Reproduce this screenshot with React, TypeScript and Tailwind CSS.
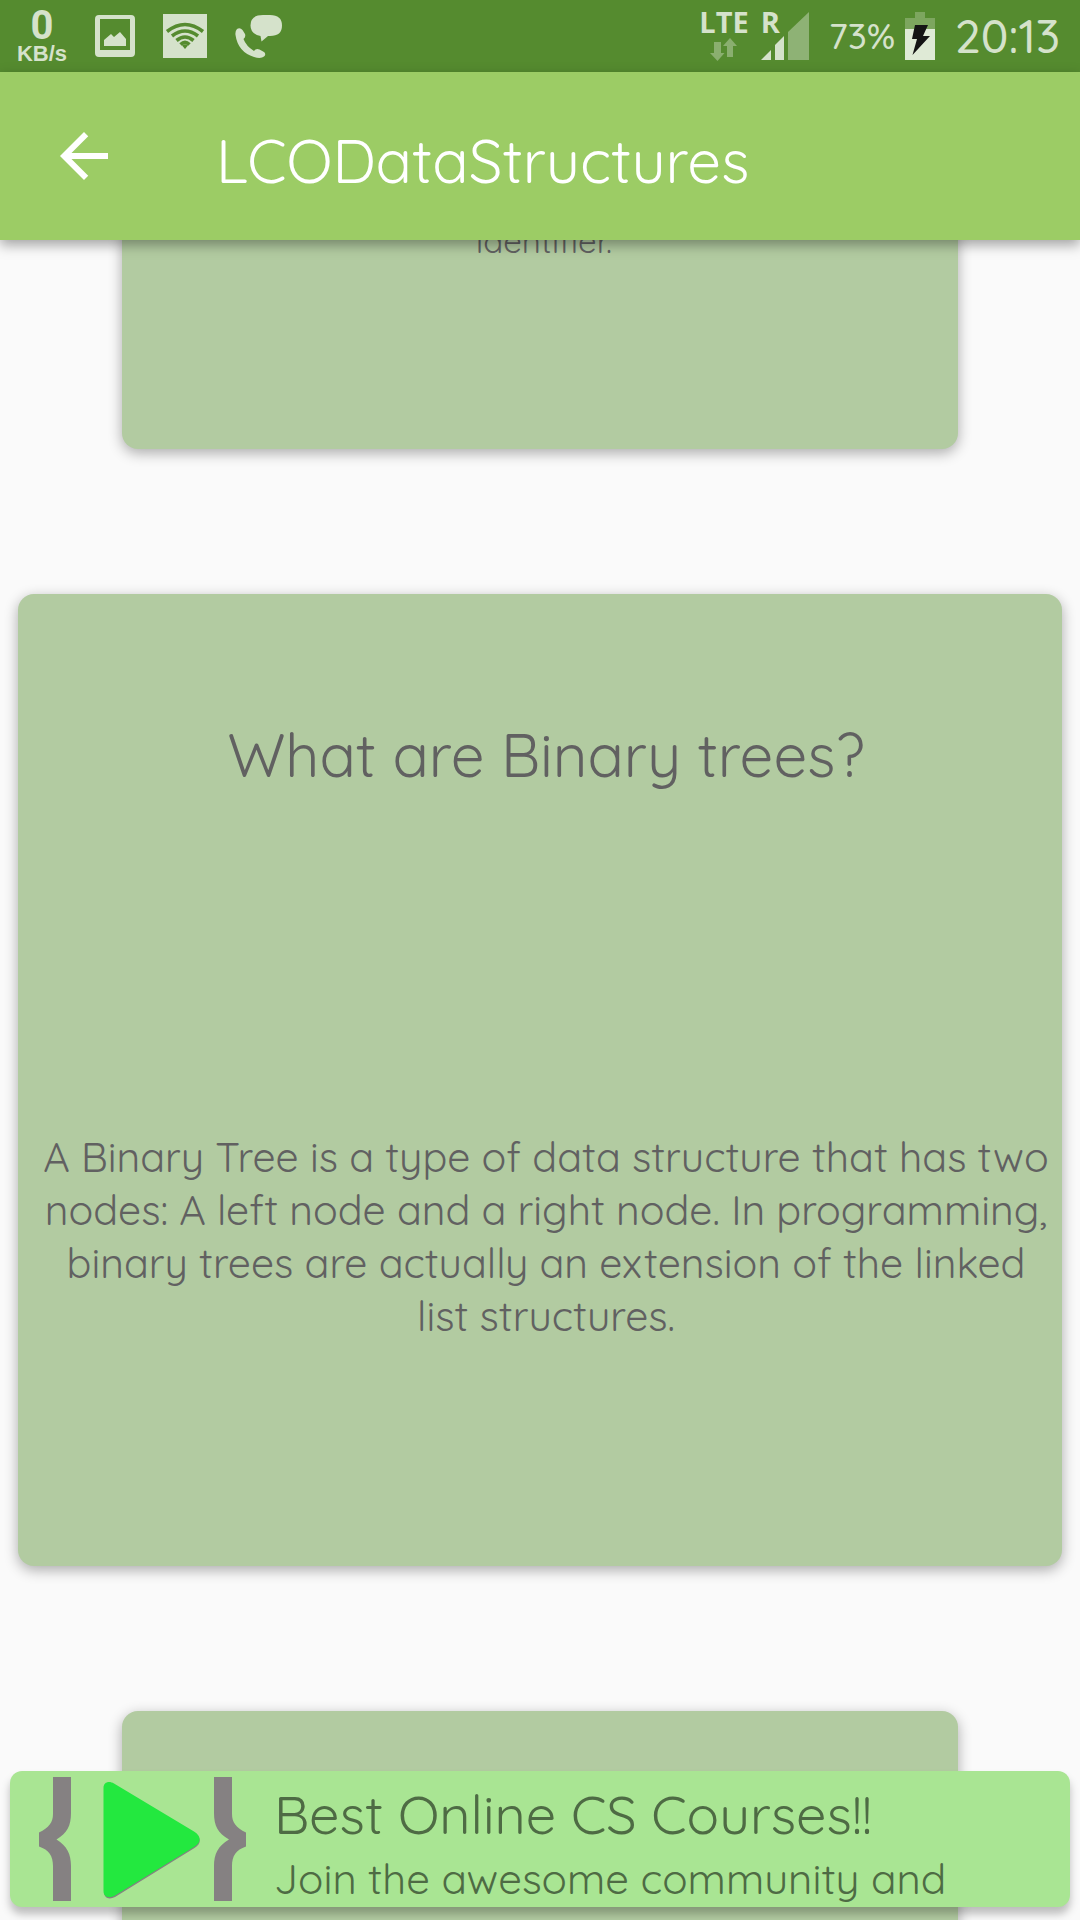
const CARD = "rounded-2xl bg-[#b2cba1] text-center text-[#616161] shadow-[0_4px_14px_rgba(0,0,0,0.32)]";

function PictureIcon() {
  return (
    <svg className="h-[42px] w-10" viewBox="0 0 40 42" fill="currentColor" aria-hidden="true">
      <path fillRule="evenodd" d="M4 0H36Q40 0 40 4V38Q40 42 36 42H4Q0 42 0 38V4Q0 0 4 0ZM5 4V35H35V4Z" />
      <path d="M9 31V25L16 19L19 22L25 17L31 24V31Z" />
    </svg>
  );
}

function WifiIcon() {
  return (
    <svg className="size-11" viewBox="0 0 44 44" aria-hidden="true">
      <rect width="44" height="44" fill="currentColor" />
      <g fill="none" stroke="#558b2f" strokeWidth="3.6">
        <path d="M4 17.5Q22 3.500 40 17.5" />
        <path d="M9 22Q22 12 35 22" />
        <path d="M13.500 26.500Q22 19.500 30.500 26.500" />
        <path d="M17.500 30.500Q22 26.500 26.500 30.500" />
      </g>
      <path d="M19 31.500Q22 29.500 25 31.500L22 35Z" fill="#558b2f" />
    </svg>
  );
}

function CallIcon() {
  return (
    <svg className="h-[43px] w-12" viewBox="0 0 48 43" fill="currentColor" aria-hidden="true">
      <path d="M28 0H35Q47 0 47 10.500Q47 21 35 21H33L26.500 26.500L25.500 21Q15.500 19 15.500 10.500Q15.500 0 28 0Z" />
      <path d="M2 14Q5 12 7.500 15L10 19Q11 22 8.500 24Q11 31 19 36Q21 33 24.500 34.500L29 37Q31.500 39 29 41.500Q26 44 19 42Q3 37 .500 20Q0 16 2 14Z" />
    </svg>
  );
}

function DataArrowsIcon() {
  return (
    <svg className="h-6 w-7" viewBox="0 0 28 24" fill="currentColor" aria-hidden="true">
      <path d="M4 4H11V15H14.500L7.500 23L0 15H4Z" />
      <path d="M17 19H23V8H27L20 0L13 8H17Z" />
    </svg>
  );
}

function SignalIcon() {
  return (
    <svg className="h-12 w-12" viewBox="0 0 48 48" fill="currentColor" aria-hidden="true">
      <path d="M0 48L10 38V48Z" />
      <path d="M14 48V33L23 24V48Z" />
      <path d="M27 48V20L48 0V48Z" opacity="0.450" />
    </svg>
  );
}

function BatteryIcon() {
  return (
    <svg className="h-12 w-[30px]" viewBox="0 0 30 48" aria-hidden="true">
      <path d="M10 0H20V6H30V17H0V6H10Z" fill="#7da65f" />
      <path d="M0 17H30V48H0Z" fill="#dfead6" />
      <path d="M10 13H23L18 24H25L7.500 43L12 27H7Z" fill="#141414" />
    </svg>
  );
}

function StatusBar() {
  return (
    <div className="flex h-[72px] shrink-0 items-center justify-between bg-[#558b2f] pr-5 pl-[17px] text-[#d5e2cb]">
      <div className="flex items-center">
        <div className="flex w-[50px] flex-col items-center font-bold">
          <span className="font-['Roboto',sans-serif] text-[40px] leading-9">0</span>
          <span className="font-['Liberation_Sans',sans-serif] text-[22px] leading-5">KB/s</span>
        </div>
        <div className="ml-7 flex items-center gap-7">
          <PictureIcon />
          <WifiIcon />
          <CallIcon />
        </div>
      </div>
      <div className="flex items-center">
        <div className="flex flex-col items-center gap-1 font-['Open_Sans',sans-serif] text-[29px] leading-6 font-bold">
          <span>LTE</span>
          <span className="text-[#8aaf6f]"><DataArrowsIcon /></span>
        </div>
        <div className="relative ml-3">
          <SignalIcon />
          <span className="absolute -top-1 left-0 font-['Open_Sans',sans-serif] text-[29px] leading-7 font-bold">R</span>
        </div>
        <span className="mr-2.5 ml-5 text-[36px] leading-none font-medium">73%</span>
        <BatteryIcon />
        <span className="ml-5 text-[46px] leading-none font-medium">20:13</span>
      </div>
    </div>
  );
}

function AppBar() {
  return (
    <header className="relative z-10 flex h-[168px] shrink-0 items-center gap-24 bg-[#9ccc65] px-12 text-white shadow-[0_5px_12px_rgba(0,0,0,0.35)]">
      <button type="button" aria-label="Back">
        <svg className="size-[72px]" viewBox="0 0 24 24" fill="currentColor" aria-hidden="true">
          <path d="M20 11H7.830l5.590-5.590L12 4l-8 8 8 8 1.410-1.410L7.830 13H20v-2z" />
        </svg>
      </button>
      <h1 className="pt-2 text-[60px] leading-[75px]">LCODataStructures</h1>
    </header>
  );
}

function BraceLogo() {
  return (
    <svg className="h-[124px] w-[207px] shrink-0" viewBox="0 0 207 124" aria-hidden="true">
      <g fill="#858182">
        <path d="M14 0H32V36C32 49 28 56 17.500 62.500C28 69 32 77 32 89V124H14V89C14 79 10 73 0 69.500V55.500C10 51 14 45 14 37Z" />
        <path d="M193 0H175V36C175 49 179 56 190 62.500C179 69 175 77 175 89V124H193V89C193 79 197 73 207 69.500V55.500C197 51 193 45 193 37Z" />
        <path d="M65 12C65 6 70 4.500 75 7.500L155.500 56C162.500 60 162.500 67 155.500 71L76 120C70 123 65 121 65 115Z" />
      </g>
      <path d="M64.500 11C64.500 5 70 3.500 75 6.500L155 54.500C162.500 59 162.500 66 155 70L76 118.500C70 122 64.500 120 64.500 114Z" fill="#23e83f" />
    </svg>
  );
}

function CourseBanner() {
  return (
    <a href="#courses" className="absolute inset-x-2.5 bottom-[13px] z-10 flex gap-7 rounded-xl bg-[#a9e593] pr-6 pl-[29px] text-[#4e6b44] shadow-[0_7px_8px_rgba(0,0,0,0.25)]">
      <span className="pt-1.5"><BraceLogo /></span>
      <span className="flex min-w-0 flex-col pt-[7px] whitespace-nowrap">
        <span className="text-[54px] leading-[72px]">Best Online CS Courses!!</span>
        <span className="text-[42px] leading-[57px]">Join the awesome community and</span>
      </span>
    </a>
  );
}

export default function App() {
  return (
    <div className="relative flex h-screen flex-col overflow-hidden bg-[#fafafa] font-['Quicksand','Lato',sans-serif] font-normal">
      <StatusBar />
      <AppBar />
      <main className="flex flex-1 flex-col gap-[145px] overflow-hidden">
        <section className={`mx-[122px] -mt-5 shrink-0 pb-[187px] pl-2 ${CARD}`}>
          <p className="text-[33px] leading-[42px]">identifier.</p>
        </section>
        <section className={`mx-[18px] shrink-0 pt-[123px] pr-2 pb-56 pl-5 ${CARD}`}>
          <h2 className="text-[60px] leading-[75px]">What are Binary trees?</h2>
          <p className="mt-[338px] text-[41px] leading-[53px]">
            A Binary Tree is a type of data structure that has two nodes: A left node and a right node. In programming, binary trees are actually an extension of the linked list structures.
          </p>
        </section>
        <section className={`mx-[122px] h-[780px] shrink-0 ${CARD}`} aria-label="Next topic" />
      </main>
      <CourseBanner />
    </div>
  );
}
